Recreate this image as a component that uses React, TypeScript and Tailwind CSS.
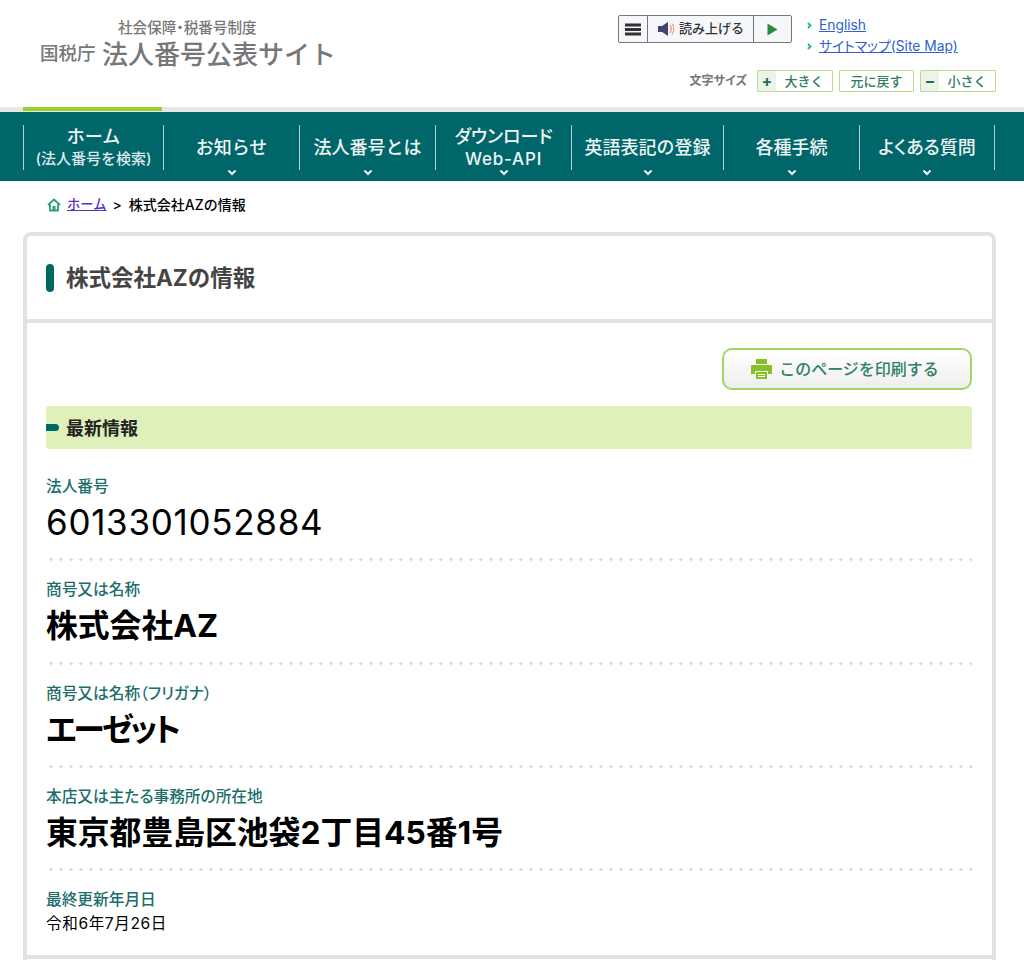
import React from "react";

function Chevron({ className = "" }: { className?: string }) {
  return (
    <svg width="10" height="7" viewBox="0 0 10 7" className={className}>
      <path d="M1.5 1.5 L5 5 L8.5 1.5" fill="none" stroke="#fff" strokeWidth="2" />
    </svg>
  );
}

function Arrow() {
  return (
    <svg width="5" height="7" viewBox="0 0 5 7" className="shrink-0">
      <path d="M1 1 L3.5 3.5 L1 6" fill="none" stroke="#2cb5a0" strokeWidth="2" />
    </svg>
  );
}

const nav: { w: string; lines: string[]; chev: boolean; sub?: boolean }[] = [
  { w: "w-[140px]", lines: ["ホーム", "(法人番号を検索)"], chev: false, sub: true },
  { w: "w-[136px]", lines: ["お知らせ"], chev: true },
  { w: "w-[136px]", lines: ["法人番号とは"], chev: true },
  { w: "w-[136px]", lines: ["ダウンロード", "Web-API"], chev: true },
  { w: "w-[152px]", lines: ["英語表記の登録"], chev: true },
  { w: "w-[136px]", lines: ["各種手続"], chev: true },
  { w: "w-[136px]", lines: ["よくある質問"], chev: true },
];

function Field({ label, value, kind }: { label: string; value: string; kind: "num" | "big" | "kana" | "small" }) {
  const cls = {
    num: "mt-[4px] text-[35px] leading-[43.33px] tracking-[0.7px] font-normal text-black",
    big: "mt-[4px] text-[31.8px] leading-[43.33px] font-bold text-black",
    kana: "mt-[4px] text-[32px] leading-[43.33px] font-bold tracking-[-3px] text-black [font-feature-settings:'palt']",
    small: "mt-[3px] text-[15.6px] leading-[22px] font-normal tracking-[0.6px] text-black",
  }[kind];
  return (
    <div>
      <div className="text-[15.7px] leading-[20px] font-medium text-[#1c6e6a] [font-feature-settings:'palt']">{label}</div>
      <div className={cls}>{value}</div>
    </div>
  );
}

function Dots() {
  return <div className="h-[3px] mt-[14px] mb-[19px] bg-[radial-gradient(circle,#dddddd_1.5px,transparent_1.6px)] bg-[length:10px_3px]" />;
}

export default function App() {
  return (
    <div className="w-[1024px] h-[960px] overflow-hidden bg-white font-['Inter','Noto_Sans_CJK_JP',sans-serif] text-black">
      <header className="h-[107px] flex justify-between pl-[40px] pr-[28px]">
        <div className="pt-[18px] text-[#777]">
          <div className="pl-[78px] text-[14.6px] leading-[20px] font-medium [font-feature-settings:'palt']">社会保障・税番号制度</div>
          <div className="flex items-center h-[32px]">
            <span className="text-[18.5px] font-medium w-[62px] whitespace-nowrap">国税庁</span>
            <span className="text-[26px] font-medium whitespace-nowrap">法人番号公表サイト</span>
          </div>
        </div>
        <div className="pt-[15px] flex flex-col items-end">
          <div className="flex w-[378px]">
            <div className="flex h-[28px] w-[174px] border border-[#777] rounded-[2px] bg-[#f6f7fb] text-[13px] font-medium text-[#333]">
              <div className="w-[29px] flex items-center justify-center border-r border-[#777]">
                <svg width="18" height="13" viewBox="0 0 18 13"><path d="M1 0.5h16v3H1zM1 5h16v3H1zM1 9.5h16v3H1z" fill="#333" /></svg>
              </div>
              <div className="w-[106px] flex items-center justify-center gap-[3px] border-r border-[#777]">
                <svg width="19" height="14" viewBox="0 0 19 14">
                  <path d="M1 4h4L11 0v14L5 10H1z" fill="#45436b" />
                  <path d="M13 3c1.6 2.5 1.6 5.5 0 8M15 1.5c2.4 3.5 2.4 7.5 0 11" fill="none" stroke="#e8804a" strokeWidth="1" />
                </svg>
                <span>読み上げる</span>
              </div>
              <div className="flex-1 flex items-center justify-center">
                <svg width="11" height="13" viewBox="0 0 11 13"><path d="M0.5 0.5L10.5 6.5L0.5 12.5z" fill="#2b8a3e" /></svg>
              </div>
            </div>
            <div className="ml-[15px] text-[13.8px] leading-[20px] text-[#2f5fd0] [font-feature-settings:'palt']">
              <div className="flex items-center gap-[7px] h-[20px]"><Arrow /><span className="underline">English</span></div>
              <div className="flex items-center gap-[7px] h-[20px] mt-[1px]"><Arrow /><span className="underline whitespace-nowrap">サイトマップ(Site Map)</span></div>
            </div>
          </div>
          <div className="flex items-center mt-[14px] h-[22px] text-[13px] font-medium text-[#2e7d5e]">
            <span className="text-[#777] text-[12px] font-bold mr-[10px] [font-feature-settings:'palt']">文字サイズ</span>
            <div className="flex w-[76px] h-[22px] border border-[#b7dc8f] mr-[6px] rounded-[1px]">
              <span className="w-[18px] bg-[#eef3ea] flex items-center justify-center text-[16px] font-bold text-[#1c6e4a]">+</span>
              <span className="flex-1 text-center leading-[20px]">大きく</span>
            </div>
            <div className="w-[75px] h-[22px] border border-[#b7dc8f] mr-[6px] rounded-[1px] text-center leading-[20px]">元に戻す</div>
            <div className="flex w-[76px] h-[22px] border border-[#b7dc8f] rounded-[1px]">
              <span className="w-[18px] bg-[#eef3ea] flex items-center justify-center text-[16px] font-bold text-[#1c6e4a]">−</span>
              <span className="flex-1 text-center leading-[20px]">小さく</span>
            </div>
          </div>
        </div>
      </header>

      <div className="h-[5px] bg-[#e9e7e1] pl-[23px]">
        <div className="w-[139px] h-[4px] bg-[#9ccf33]" />
      </div>

      <nav className="h-[69px] bg-[#00666a] flex pl-[23px] pt-[13px] text-white">
        {nav.map((n, i) => (
          <div
            key={i}
            className={`${n.w} relative h-[45px] border-l border-[#b8cfcf] flex flex-col items-center justify-center text-center ${i === nav.length - 1 ? "border-r" : ""}`}
          >
            {n.lines.map((l, j) => (
              <div
                key={j}
                className={
                  n.sub && j === 1
                    ? "text-[15px] leading-[22px] font-medium text-[#dfeaea] whitespace-nowrap"
                    : l === "Web-API"
                      ? "text-[17px] leading-[22px] font-medium tracking-[0.8px] text-[#eef5f5] whitespace-nowrap"
                      : l === "ダウンロード" || l === "よくある質問"
                        ? "text-[18px] leading-[22px] font-medium text-[#eef5f5] whitespace-nowrap [font-feature-settings:'palt']"
                        : "text-[18px] leading-[22px] font-medium text-[#eef5f5] whitespace-nowrap"
                }
              >
                {l}
              </div>
            ))}
            {n.chev && <Chevron className="absolute left-1/2 -translate-x-1/2 top-[44px]" />}
          </div>
        ))}
      </nav>

      <div className="h-[51px] pl-[47px] flex items-center text-[14px] font-medium pb-[4px]">
        <svg width="14" height="14" viewBox="0 0 14 14" className="mr-[6px]">
          <path d="M1 7L7 1.5L13 7M3 6.5V12.5H11V6.5" fill="none" stroke="#2a9d78" strokeWidth="1.8" />
          <rect x="5.5" y="8" width="3" height="4.5" fill="#2a9d78" />
        </svg>
        <span className="underline text-[13.3px] text-[#5b2fc4]">ホーム</span>
        <span className="ml-[6px] mr-[7px]">&gt;</span>
        <span>株式会社AZの情報</span>
      </div>

      <main className="ml-[23px] w-[973px] h-[760px] border-4 border-[#e2e2e2] rounded-[8px]">
        <div className="h-[87px] border-b-4 border-[#e2e2e2] flex items-center pl-[19px] pt-[1px]">
          <div className="w-[8px] h-[28px] rounded-[4px] bg-[#00695f] mr-[12px]" />
          <h1 className="text-[22.5px] font-bold text-[#444]">株式会社AZの情報</h1>
        </div>
        <div className="pl-[19px] pr-[20px] pt-[25px]">
          <div className="flex justify-end">
            <div className="w-[250px] h-[42px] border-2 border-[#a3d465] rounded-[10px] bg-gradient-to-b from-white to-[#eeeeee] flex items-center justify-center gap-[7px] pr-[4px] text-[16px] font-medium text-[#2e8060]">
              <svg width="21" height="20" viewBox="0 0 21 20">
                <path d="M5 0h11v5H5zM0 6h21v9h-4v-3H4v3H0zM5 13h11v7H5z" fill="#84c225" />
                <path d="M7 15.5h7M7 17.5h7" stroke="#fff" strokeWidth="1" />
              </svg>
              <span>このページを印刷する</span>
            </div>
          </div>
          <div className="mt-[16px] h-[43px] rounded-[3px] bg-[#dff0bb] flex items-center">
            <div className="w-[13px] h-[7px] bg-[#00695f] rounded-r-[4px] mr-[7px]" />
            <h2 className="text-[18px] leading-[18px] font-bold text-[#222] pt-[2px]">最新情報</h2>
          </div>
          <div className="mt-[28px]">
            <Field label="法人番号" value="6013301052884" kind="num" />
            <Dots />
            <Field label="商号又は名称" value="株式会社AZ" kind="big" />
            <Dots />
            <Field label="商号又は名称（フリガナ）" value="エーゼット" kind="kana" />
            <Dots />
            <Field label="本店又は主たる事務所の所在地" value="東京都豊島区池袋2丁目45番1号" kind="big" />
            <Dots />
            <Field label="最終更新年月日" value="令和6年7月26日" kind="small" />
          </div>
        </div>
        <div className="mt-[20px] border-t-4 border-[#e2e2e2]" />
      </main>
    </div>
  );
}
